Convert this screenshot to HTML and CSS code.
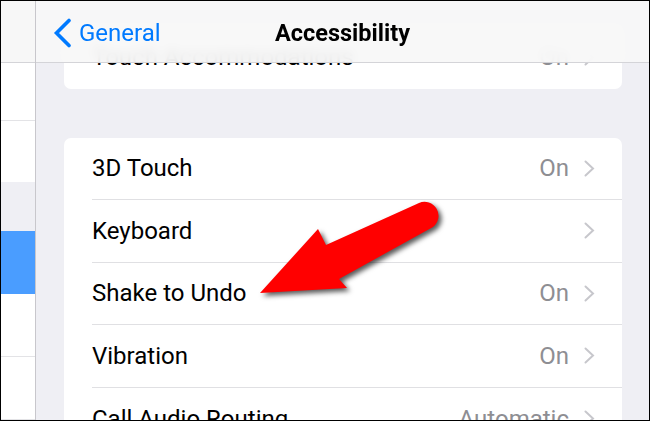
FILE: index.html
```html
<!DOCTYPE html>
<html lang="en">
<head>
<meta charset="utf-8">
<title>Accessibility</title>
<link rel="stylesheet" href="styles.css">
</head>
<body>
<div class="frame">
  <aside class="sidebar">
    <div class="side-nav"></div>
    <div class="side-row r1"></div>
    <div class="side-row r2"></div>
    <div class="side-gap"></div>
    <div class="side-row sel"></div>
    <div class="side-row r4"></div>
    <div class="side-row r5"></div>
  </aside>
  <main class="main">
    <header class="nav">
      <a class="back">
        <svg class="back-chev" width="20" height="30" viewBox="0 0 20 30"><path d="M17 2.5 L4.5 15 L17 27.5" fill="none" stroke="#007aff" stroke-width="3.6" stroke-linecap="round" stroke-linejoin="miter"/></svg>
        <span>General</span>
      </a>
      <h1 class="title">Accessibility</h1>
      <div></div>
    </header>
    <div class="content">
      <section class="card card-top">
        <div class="row"><div class="row-inner"><span class="label">Touch Accommodations</span><span class="value">On</span><svg class="chev" width="11" height="17" viewBox="0 0 11 17"><path d="M1.5 1.5 L9 8.5 L1.5 15.5" fill="none" stroke="#c7c7cc" stroke-width="2" stroke-linecap="round"/></svg></div></div>
      </section>
      <section class="card">
        <div class="row"><div class="row-inner"><span class="label">3D Touch</span><span class="value">On</span><svg class="chev" width="11" height="17" viewBox="0 0 11 17"><path d="M1.5 1.5 L9 8.5 L1.5 15.5" fill="none" stroke="#c7c7cc" stroke-width="2" stroke-linecap="round"/></svg></div></div>
        <div class="row"><div class="row-inner"><span class="label">Keyboard</span><svg class="chev" width="11" height="17" viewBox="0 0 11 17"><path d="M1.5 1.5 L9 8.5 L1.5 15.5" fill="none" stroke="#c7c7cc" stroke-width="2" stroke-linecap="round"/></svg></div></div>
        <div class="row"><div class="row-inner"><span class="label">Shake to Undo</span><span class="value">On</span><svg class="chev" width="11" height="17" viewBox="0 0 11 17"><path d="M1.5 1.5 L9 8.5 L1.5 15.5" fill="none" stroke="#c7c7cc" stroke-width="2" stroke-linecap="round"/></svg></div></div>
        <div class="row"><div class="row-inner"><span class="label">Vibration</span><span class="value">On</span><svg class="chev" width="11" height="17" viewBox="0 0 11 17"><path d="M1.5 1.5 L9 8.5 L1.5 15.5" fill="none" stroke="#c7c7cc" stroke-width="2" stroke-linecap="round"/></svg></div></div>
        <div class="row"><div class="row-inner"><span class="label">Call Audio Routing</span><span class="value">Automatic</span><svg class="chev" width="11" height="17" viewBox="0 0 11 17"><path d="M1.5 1.5 L9 8.5 L1.5 15.5" fill="none" stroke="#c7c7cc" stroke-width="2" stroke-linecap="round"/></svg></div></div>
      </section>
    </div>
  </main>
  <svg class="arrow" width="650" height="421" viewBox="0 0 650 421">
    <path d="M260 293 L318 229 L326 245 L419 203 A14 14 0 0 1 433 227 L339 279 L347 288 Z" fill="#ff0000"/>
  </svg>
</div>
</body>
</html>
```

FILE: styles.css
```css
* {
  box-sizing: border-box;
  margin: 0;
  padding: 0;
}

body {
  margin: 0;
  background: #ffffff;
  font-family: Roboto, "Liberation Sans", sans-serif;
}

.frame {
  position: relative;
  width: 650px;
  height: 421px;
  border: 1px solid #000000;
  display: flex;
  overflow: hidden;
  background: #efeff4;
}

.sidebar {
  width: 35px;
  flex: none;
  display: flex;
  flex-direction: column;
  border-right: 1px solid #c8c7cc;
  background: #ffffff;
}

.side-nav {
  height: 62px;
  flex: none;
  background: #f7f7f7;
  border-bottom: 1px solid #d4d4d8;
}

.side-row {
  flex: none;
  background: #ffffff;
}

.r1 {
  height: 58px;
  border-bottom: 1px solid #e3e3e6;
}

.r2 {
  height: 61px;
}

.side-gap {
  flex: none;
  height: 49px;
  background: #efeff4;
}

.sel {
  height: 63px;
  background: #4a9dff;
}

.r4,
.r5 {
  height: 63px;
  border-bottom: 1px solid #e3e3e6;
}

.main {
  position: relative;
  flex: 1;
  overflow: hidden;
}

.nav {
  position: absolute;
  top: 0;
  left: 0;
  right: 0;
  height: 62px;
  z-index: 2;
  display: grid;
  grid-template-columns: 1fr auto 1fr;
  align-items: center;
  background: rgba(247, 247, 247, 0.92);
  backdrop-filter: blur(6px);
  border-bottom: 1px solid #d4d4d8;
}

.back {
  display: flex;
  align-items: center;
  gap: 7px;
  padding-left: 16px;
  padding-top: 2px;
  color: #007aff;
  font-size: 24px;
  text-decoration: none;
}

.back-chev {
  display: block;
}

.title {
  padding-top: 2px;
  font-size: 23.5px;
  font-weight: 700;
  color: #000000;
}

.content {
  padding: 25px 27px 0 28px;
}

.card {
  background: #ffffff;
  border-radius: 7px;
}

.card-top {
  border-radius: 0 0 7px 7px;
  margin-bottom: 49px;
}

.row {
  padding-left: 28px;
}

.row-inner {
  height: 62.5px;
  display: flex;
  align-items: center;
  padding-right: 27px;
  border-bottom: 1px solid #e0e0e3;
}

.row:last-child .row-inner {
  border-bottom: none;
}

.label {
  flex: 1;
  font-size: 24px;
  color: #000000;
  white-space: nowrap;
}

.value {
  font-size: 24px;
  color: #8e8e93;
  margin-right: 15px;
}

.chev {
  display: block;
  flex: none;
}

.arrow {
  position: absolute;
  top: -1px;
  left: -1px;
  z-index: 3;
  pointer-events: none;
  filter: drop-shadow(3px 3px 2.5px rgba(0, 0, 0, 0.65));
}
```
